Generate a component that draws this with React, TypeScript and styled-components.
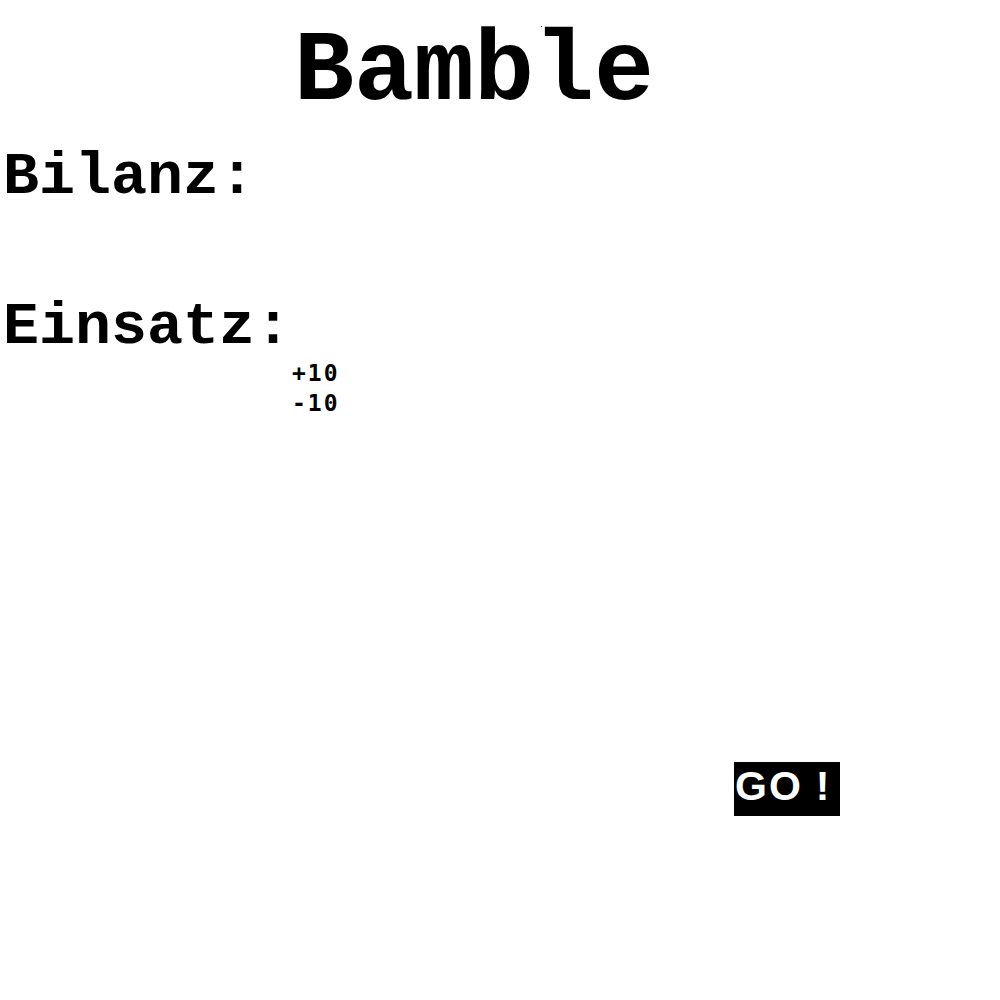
import React from "react";
import styled, { createGlobalStyle } from "styled-components";

const mono = `"Courier New", Courier, "Nimbus Mono PS", "Nimbus Mono L", FreeMono, "Liberation Mono", monospace`;

const Global = createGlobalStyle`
  html, body { margin: 0; padding: 0; background: #fff; }
  body { font-family: ${mono}; color: #000; }
`;

const Page = styled.main`
  display: flex;
  flex-direction: column;
  width: 1000px;
  min-height: 1000px;
`;

const Title = styled.h1`
  position: relative;
  margin: 13px 0 0;
  padding-left: 294px;
  font-family: ${mono};
  font-weight: bold;
  font-size: 100px;
  line-height: 120px;
  height: 120px;
`;

const Speck = styled.span`
  position: absolute;
  left: 541px;
  top: 13px;
  width: 1px;
  height: 1px;
  background: #555;
`;

const Label = styled.h2<{ $gap: number }>`
  margin: ${(p) => p.$gap}px 0 0;
  padding-left: 3px;
  font-family: ${mono};
  font-weight: bold;
  font-size: 60px;
  line-height: 60px;
`;

const Stakes = styled.div`
  display: flex;
  flex-direction: column;
  align-items: flex-start;
  margin-top: 1px;
  padding-left: 292px;
`;

const StakeButton = styled.div`
  font-family: "DejaVu Sans Mono", monospace;
  font-weight: bold;
  font-size: 23px;
  line-height: 30px;
  letter-spacing: 2px;
  cursor: pointer;
`;

const Footer = styled.div`
  display: flex;
  margin-top: 344px;
  padding-left: 734px;
`;

const GoButton = styled.div`
  box-sizing: border-box;
  display: flex;
  align-items: flex-start;
  width: 106px;
  height: 54px;
  padding: 0 0 6px 1px;
  background: #000;
  color: #fff;
  font-family: "Liberation Sans", Arial, sans-serif;
  font-weight: bold;
  font-size: 41px;
  line-height: 48px;
  letter-spacing: 2px;
  cursor: pointer;
`;

const Bang = styled.span`
  margin-left: 13px;
`;

export default function App() {
  return (
    <>
      <Global />
      <Page>
        <Title>
          Bamble
          <Speck />
        </Title>
        <Label $gap={14}>Bilanz:</Label>
        <Label $gap={90}>Einsatz:</Label>
        <Stakes>
          <StakeButton>+10</StakeButton>
          <StakeButton>-10</StakeButton>
        </Stakes>
        <Footer>
          <GoButton>
            GO<Bang>!</Bang>
          </GoButton>
        </Footer>
      </Page>
    </>
  );
}
